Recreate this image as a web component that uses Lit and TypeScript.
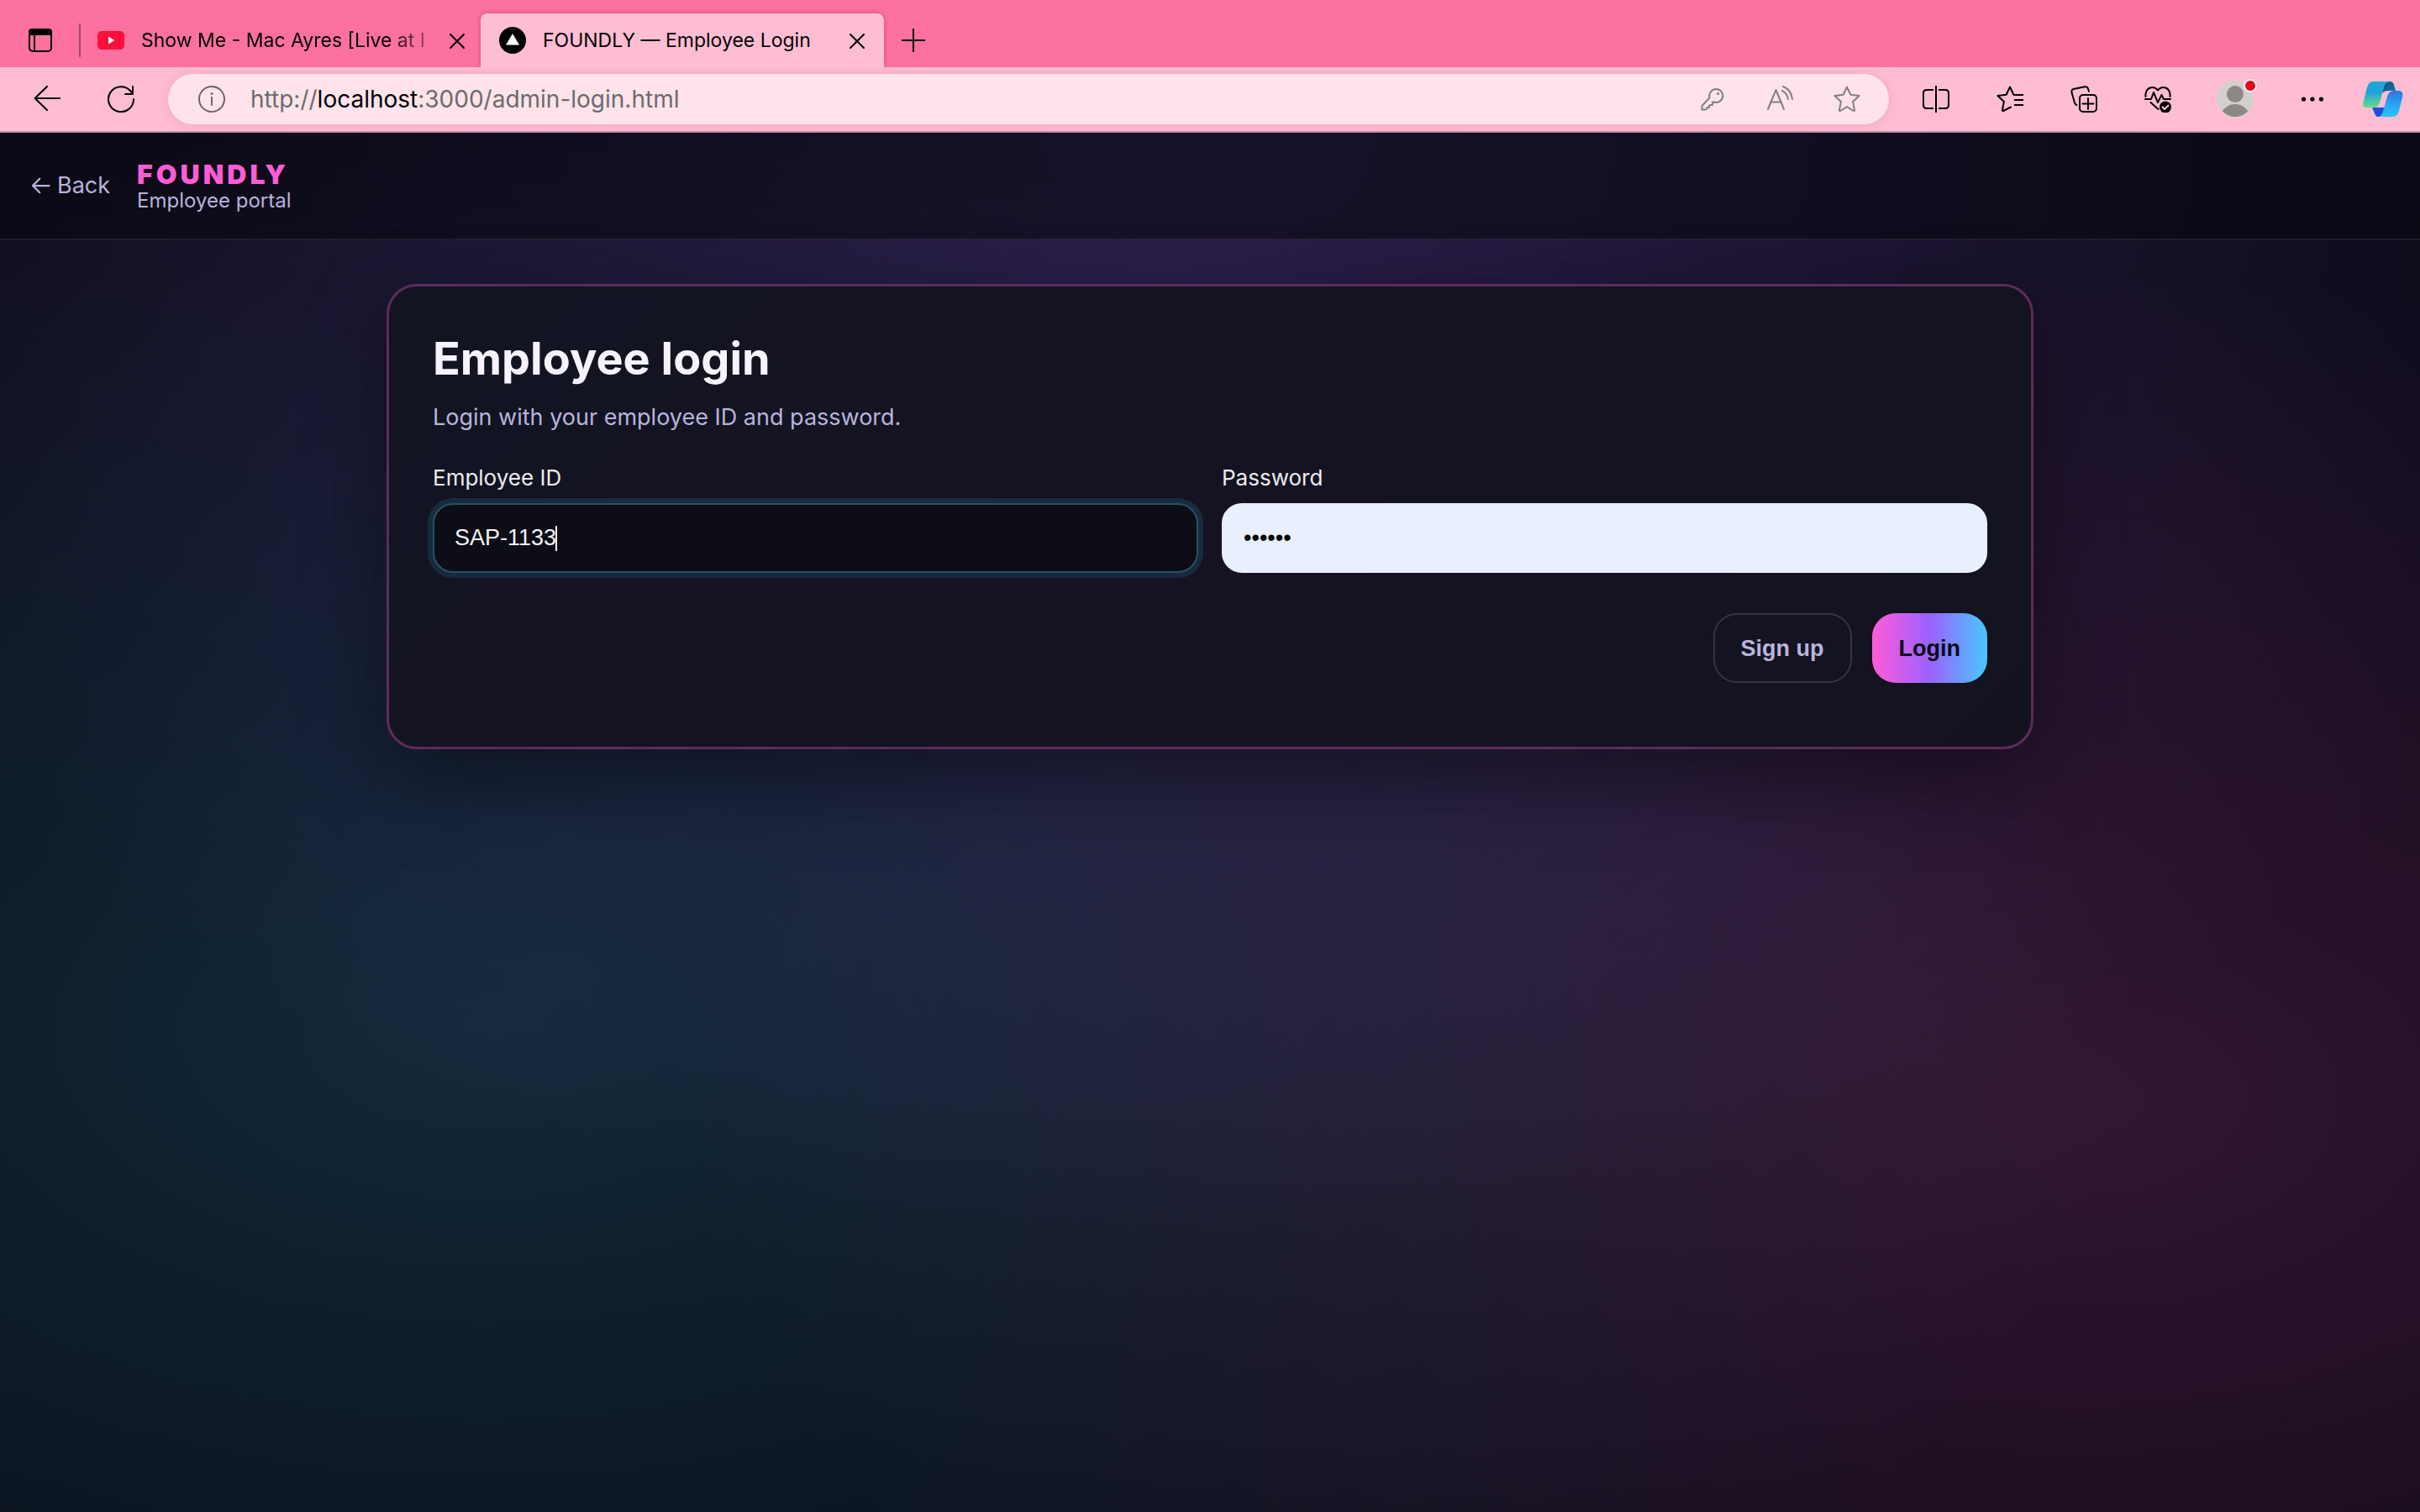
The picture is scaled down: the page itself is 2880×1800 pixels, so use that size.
import { LitElement, html, css, svg } from "lit";
import { customElement, state } from "lit/decorators.js";

const stroke = (body: unknown, size = 32, width = 2) => html`<svg
  class="icon" width=${size} height=${size} viewBox="0 0 32 32" fill="none" stroke="currentColor"
  stroke-width=${width} stroke-linecap="round" stroke-linejoin="round" aria-hidden="true">${body}</svg>`;

const icons = {
  tabs: stroke(svg`<rect x="3" y="3" width="26" height="26" rx="4"/><path d="M3 9V6q0-3 3-3h20q3 0 3 3v3z" fill="currentColor"/><path d="M9 10v18"/>`),
  close: stroke(svg`<path d="M8 9l16 16M24 9L8 25"/>`),
  plus: stroke(svg`<path d="M16 2v28M2 16h28" stroke-linecap="butt"/>`),
  back: stroke(svg`<path d="M31 15H1.500M16 1L1.500 15 16 29"/>`),
  reload: stroke(svg`<path d="M31 16A15 15 0 1 1 27.500 6.500L30 9.500M30 1v9h-9"/>`),
  info: stroke(svg`<circle cx="16" cy="16" r="15"/><path d="M16 14v9"/><circle cx="16" cy="9.500" r="1" fill="currentColor" stroke-width="1"/>`),
  key: stroke(svg`<path d="M20.500 4a8 8 0 1 1-3 15.500l-1.500 0v3.500h-3l-1 1v2H9.500v1.500L8 28.500H3.500V24l9-9.500A8.300 8.300 0 0 1 20.500 4z"/><circle cx="22.500" cy="9.500" r="1.200" fill="currentColor" stroke-width="1"/>`),
  read: stroke(svg`<path d="M2 28L11.500 5 21 28M5 19.500h13"/><path d="M19 6q6 3 7 10M20 1q10 4 11 15"/>`),
  star: stroke(svg`<path d="M16 1.500l4.400 9.300 10.200 1.300-7.500 7 2 10.100q0 1.200-1.200.8L16 25.200 8.100 30q-1.200.4-1.200-.8l2-10.100-7.500-7 10.200-1.300z"/>`),
  split: stroke(svg`<path d="M13 5H5q-4 0-4 4v14q0 4 4 4h8M19 5h8q4 0 4 4v14q0 4-4 4h-8M16 0v32" stroke-linecap="butt"/>`),
  favs: stroke(svg`<path d="M22 11l-1.600-.2L16 1.500l-4.400 9.300-10.200 1.300 7.500 7-2 10.100q0 1.200 1.200.8L17 25.500"/><path d="M21 11h11M21 17h11M21 23h11" stroke-linecap="butt"/>`),
  collections: stroke(svg`<rect x="11" y="11" width="20" height="20" rx="4"/><path d="M21 15v13M14.500 21.500h13M7.500 23q-2-.5-2.600-3L1.500 8q-.6-3 2-4L17 1.200q3-.4 3.800 2l1.200 3.600"/>`),
  health: stroke(svg`<path d="M1.500 13C.5 6 5 2 9.500 2q4 0 6.500 3.500Q18.500 2 22.500 2C27 2 31.500 6 30.500 13M1 16h7l3-8 5 12 4.500-9 2.500 5h8M7.500 20l9 8"/><circle cx="25" cy="25.500" r="7" fill="currentColor" stroke="none"/><path d="M21.500 25.500l2.500 2.500 4.500-4.500" stroke="#ffbdd2"/>`),
  more: html`<svg class="icon" width="32" height="32" viewBox="0 0 32 32" fill="currentColor" aria-hidden="true"><circle cx="5.500" cy="16" r="2.600"/><circle cx="16" cy="16" r="2.600"/><circle cx="26.500" cy="16" r="2.600"/></svg>`,
  video: html`<svg class="icon" width="32" height="32" viewBox="0 0 32 32" aria-hidden="true"><rect y="5" width="32" height="22" rx="5" fill="#ff0f39"/><path d="M13 11.500v9l7.500-4.500z" fill="#fff"/></svg>`,
  site: html`<svg class="icon" width="32" height="32" viewBox="0 0 32 32" aria-hidden="true"><circle cx="16" cy="16" r="16"/><path d="M16 8l8 13.500H8z" fill="#fff"/></svg>`,
  avatar: html`<svg class="icon" width="52" height="52" viewBox="0 0 52 52" aria-hidden="true">
    <defs><clipPath id="face"><circle cx="26" cy="26" r="21"/></clipPath></defs>
    <circle cx="26" cy="26" r="22" fill="#d2d0cd"/>
    <g fill="#8c8886" clip-path="url(#face)"><circle cx="26" cy="20" r="10"/><circle cx="26" cy="50" r="18"/></g>
    <circle cx="44" cy="10" r="8" fill="#fbeef0"/><circle cx="44" cy="10" r="6" fill="#e00b1c"/></svg>`,
  copilot: html`<svg class="icon" width="48" height="42" viewBox="0 0 48 42" aria-hidden="true">
    <defs>
      <linearGradient id="cpA" x1="0" y1="0" x2="0" y2="1"><stop offset="0" stop-color="#22a9cf"/><stop offset=".4" stop-color="#1fa0dc"/><stop offset="1" stop-color="#63df86"/></linearGradient>
      <linearGradient id="cpB" x1="0.400" y1="0" x2=".4" y2="1"><stop offset="0" stop-color="#2d74dc"/><stop offset=".6" stop-color="#2aa9f8"/><stop offset="1" stop-color="#24c6e8"/></linearGradient>
      <linearGradient id="cpC" x1="0" y1="0" x2="1" y2="1"><stop offset="0" stop-color="#0e4f80"/><stop offset="1" stop-color="#1878a8"/></linearGradient>
    </defs>
    <path d="M26 0h6q4 0 5 4l2 7h-7q-7 0-9 3z" fill="url(#cpC)"/>
    <path d="M11 31h15l-4 11h-4q-3 0-4-4z" fill="#1d4fd8"/>
    <path d="M12 0h21q-6 0-8 7l-5 18q-2 6-7 6H5q-7 0-4-8L5 7q2-7 7-7z" fill="url(#cpA)"/>
    <path d="M36 42H17q5 0 7-6l5-18q2-7 8-7h5q7 0 5 8l-4 16q-2 7-7 7z" fill="url(#cpB)"/></svg>`,
  arrowLeft: stroke(svg`<path d="M30 16H5M15 5L4 16l11 11"/>`, 24, 3),
};

@customElement("browser-chrome")
export class BrowserChrome extends LitElement {
  static styles = css`
    :host { display: block; color: #000; font-family: Inter, "Liberation Sans", sans-serif; }
    .icon { display: block; flex: none; }
    button {
      display: flex; align-items: center; justify-content: center; flex: none; width: 32px; height: 32px;
      padding: 0; border: 0; background: none; color: inherit; font: inherit;
    }
    .strip { display: flex; height: 80px; padding-top: 16px; box-sizing: border-box; background: #fc71a0; }
    .actions { display: flex; align-items: center; gap: 30px; padding-left: 32px; }
    .divider { width: 2px; height: 40px; background: #a34a69; }
    .tab {
      display: flex; align-items: center; gap: 20px; box-sizing: border-box;
      width: 480px; height: 64px; padding: 0 16px 0 22px; font-size: 23px; line-height: 32px; white-space: nowrap;
    }
    .idle { width: 476px; padding: 0 12px 0 20px; }
    .title { flex: 1; min-width: 0; color: inherit; text-decoration: none; }
    .idle .title { margin-right: -18px; mask-image: linear-gradient(90deg, #000 82%, transparent 102%); }
    .active { border-radius: 8px 8px 0 0; background: #febdd2; box-shadow: 0 0 6px rgba(110, 20, 60, .35); clip-path: inset(-8px -8px 0 -8px); }
    .new { align-self: center; margin: 0 0 0 19px; }
    .toolbar {
      display: flex; align-items: center; gap: 56px; height: 78px; box-sizing: border-box;
      padding: 0 32px 0 40px; border-bottom: 2px solid #c092a0; background: #febdd2;
    }
    .address {
      display: flex; flex: 1; align-items: center; gap: 30px; height: 60px; box-sizing: border-box; min-width: 0;
      margin: 0 -16px; padding: 0 34px 0 36px; border-radius: 30px; background: #ffe3eb;
      box-shadow: 0 0 14px rgba(190, 80, 120, .2); color: #6e6468;
    }
    .url { flex: 1; min-width: 0; font-size: 28px; line-height: 36px; white-space: nowrap; color: #6b6b6b; }
    .url b { color: #000; font-weight: 400; }
    .tools { display: flex; align-items: center; gap: 48px; color: #808080; }
    .profile { width: 40px; }
    .copilot { width: 24px; }
  `;

  render() {
    return html`
      <nav class="strip" aria-label="Tabs">
        <div class="actions">
          <button aria-label="Tab actions">${icons.tabs}</button>
          <span class="divider"></span>
        </div>
        <div class="tab idle">
          ${icons.video}
          <a class="title" href="#video">Show Me - Mac Ayres [Live at I</a>
          <button aria-label="Close tab">${icons.close}</button>
        </div>
        <div class="tab active">
          ${icons.site}
          <a class="title" href="#login">FOUNDLY — Employee Login</a>
          <button aria-label="Close tab">${icons.close}</button>
        </div>
        <button class="new" aria-label="New tab">${icons.plus}</button>
      </nav>
      <div class="toolbar">
        <button aria-label="Back">${icons.back}</button>
        <button aria-label="Reload">${icons.reload}</button>
        <div class="address">
          <button aria-label="Site information">${icons.info}</button>
          <span class="url">http://<b>localhost</b>:3000/admin-login.html</span>
          <div class="tools">
            <button aria-label="Saved passwords">${icons.key}</button>
            <button aria-label="Read aloud">${icons.read}</button>
            <button aria-label="Add to favourites">${icons.star}</button>
          </div>
        </div>
        <button aria-label="Split screen">${icons.split}</button>
        <button aria-label="Favourites">${icons.favs}</button>
        <button aria-label="Collections">${icons.collections}</button>
        <button aria-label="Browser essentials">${icons.health}</button>
        <button class="profile" aria-label="Profile">${icons.avatar}</button>
        <button aria-label="Settings and more">${icons.more}</button>
        <button class="copilot" aria-label="Copilot">${icons.copilot}</button>
      </div>
    `;
  }
}

@customElement("login-card")
export class LoginCard extends LitElement {
  static styles = css`
    :host { display: block; width: 100%; max-width: 1960px; }
    .card {
      display: flex; flex-direction: column; box-sizing: border-box; padding: 52px 52px 76px;
      border: 3px solid #5d2c5b; border-radius: 36px; color: #f6f3ff;
      background: linear-gradient(135deg, #121422, #151322 50%, #131320);
      box-shadow: 0 36px 100px rgba(0, 0, 0, .45);
    }
    h1 { margin: 0; font-size: 54px; line-height: 68px; font-weight: 700; }
    p { margin: 16px 0 0; font-size: 27px; line-height: 40px; color: #b9b4dc; }
    .fields { display: grid; grid-template-columns: 1fr 1fr; gap: 28px; margin-top: 36px; }
    .field { display: flex; flex-direction: column; gap: 14px; }
    label { font-size: 26px; line-height: 32px; color: #ececec; }
    input {
      box-sizing: border-box; width: 100%; height: 83px; padding: 0 24px; border: 2px solid #24526a; border-radius: 24px;
      background: #0d0d15; color: #f6f3ff; font: 27px/36px "Liberation Sans", Arial, sans-serif; outline: none;
    }
    .focus {
      box-shadow: 0 0 0 6px #1a2a3d; caret-color: transparent;
      background: linear-gradient(#f6f3ff, #f6f3ff) 144px 50% / 2px 30px no-repeat #0d0d15;
    }
    .filled { border-color: #e8f0fe; background: #e8f0fe; color: #000; }
    .buttons { display: flex; justify-content: flex-end; gap: 24px; margin-top: 48px; }
    button {
      height: 83px; padding: 0 31px; border: 2px solid #353442; border-radius: 28px; background: none;
      color: #b9b4dc; font: 700 27px/36px "Liberation Sans", Arial, sans-serif;
    }
    .primary { padding: 0 32px; border: 0; background: linear-gradient(90deg, #ff5cd6, #9b62ff 50%, #47c8ff); color: #0a0913; }
  `;

  @state() private employeeId = "SAP-1133";

  render() {
    return html`
      <form class="card" @submit=${(e: Event) => e.preventDefault()}>
        <h1>Employee login</h1>
        <p>Login with your employee ID and password.</p>
        <div class="fields">
          <div class="field">
            <label for="employee-id">Employee ID</label>
            <input class="focus" id="employee-id" type="text" autocomplete="off" spellcheck="false" .value=${this.employeeId} />
          </div>
          <div class="field">
            <label for="password">Password</label>
            <input class="filled" id="password" type="password" autocomplete="off" .value=${"secret"} />
          </div>
        </div>
        <div class="buttons">
          <button type="button">Sign up</button>
          <button class="primary" type="submit">Login</button>
        </div>
      </form>
    `;
  }
}

@customElement("app-root")
export class AppRoot extends LitElement {
  static styles = css`
    :host { display: flex; flex-direction: column; min-height: 100vh; font-family: Inter, "Liberation Sans", sans-serif; }
    .page {
      flex: 1; color: #b9b4dc;
      background:
        radial-gradient(64% 80% at 50% 0%, rgba(155, 98, 255, .26), transparent),
        radial-gradient(68% 66% at 20% 65%, rgba(71, 200, 255, .18), transparent),
        radial-gradient(58% 60% at 86% 70%, rgba(255, 92, 214, .18), transparent),
        #07070f;
    }
    .bar {
      display: flex; align-items: center; gap: 32px; height: 128px; box-sizing: border-box; padding: 0 36px;
      border-bottom: 2px solid rgba(255, 255, 255, .08); background: rgba(7, 7, 15, .55);
    }
    .back { display: flex; align-items: center; gap: 8px; color: inherit; font-size: 27px; line-height: 36px; text-decoration: none; }
    .brand { display: flex; flex-direction: column; padding-top: 2px; }
    .name { font-size: 32px; line-height: 34px; font-weight: 900; letter-spacing: 4px; color: #ff5cd6; }
    .sub { font-size: 24px; line-height: 28px; }
    main { display: flex; justify-content: center; padding: 52px 40px; }
  `;

  render() {
    return html`
      <browser-chrome></browser-chrome>
      <div class="page">
        <header class="bar">
          <a class="back" href="#back">${icons.arrowLeft}Back</a>
          <div class="brand"><span class="name">FOUNDLY</span><span class="sub">Employee portal</span></div>
        </header>
        <main><login-card></login-card></main>
      </div>
    `;
  }
}
